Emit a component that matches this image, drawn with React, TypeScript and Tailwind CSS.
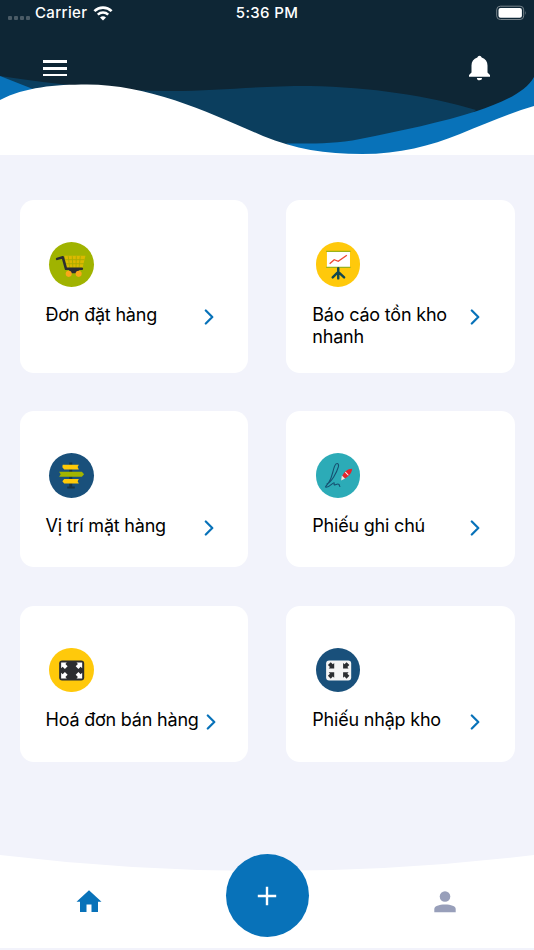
import React from 'react';

type CardItem = {
  title: string;
  color: string;
  height: string;
  chevron: string;
  icon: React.ReactNode;
};

// Four arrows, one in each corner of a rounded plate
const ArrowPlate = ({ plate, arrow, inward }: { plate: string; arrow: string; inward?: boolean }) => {
  const path = inward
    ? 'M6.8 6.8V1.4L5.4 2.6 3.4.6.6 3.4 2.6 5.4 1.4 6.8z'
    : 'M.8.8V6.4L2.3 5 4.5 7.2 7.2 4.5 5 2.3 6.4.8z';
  return (
    <svg viewBox="0 0 44 44" className="h-full w-full">
      <rect x="10" y="12.3" width="24.8" height="19.8" rx="3" fill={plate} />
      <g fill={arrow}>
        <path d={path} transform="translate(11.200 13.500)" />
        <path d={path} transform="translate(33.600 13.500) scale(-1 1)" />
        <path d={path} transform="translate(11.200 30.900) scale(1 -1)" />
        <path d={path} transform="translate(33.600 30.900) scale(-1 -1)" />
      </g>
    </svg>
  );
};

const CartIcon = () => (
  <svg viewBox="0 0 44 44" className="h-full w-full">
    <path d="M15.300 13.700h20.700l-2.800 11.800H17.500z" fill="#dcb900" />
    <path d="M19 14l1.500 11.500M23 14l.6 11.500M27 14l-.3 11.500M31 14l-1.300 11.500M16 17.500h19M16.500 21.500h18" stroke="#a8ac00" strokeWidth=".9" fill="none" />
    <path d="M8 16.700l5.600-1.700L16.800 26.500h15.700" stroke="#2b2d30" strokeWidth="2.500" strokeLinecap="round" strokeLinejoin="round" fill="none" />
    <path d="M19 27h11.500l-2.500 4h-6z" fill="#2b2d30" />
    <circle cx="19.500" cy="31.500" r="3" fill="#fba61a" />
    <circle cx="29.300" cy="31.500" r="3" fill="#fba61a" />
  </svg>
);

const BoardIcon = () => (
  <svg viewBox="0 0 44 44" className="h-full w-full">
    <rect x="10.800" y="9.500" width="22.800" height="15.500" fill="#fff" />
    <path d="M10 9.200h24.200M10 25.100h24.200" stroke="#9bb21a" strokeWidth="1.300" />
    <path d="M13.500 21.500l4.500-4 4 1.600 8.500-6" stroke="#ef4a36" strokeWidth="1.400" fill="none" />
    <path d="M22 26v10M22 29.500l-5.500 5.500M22 29.500l5.800 5.500" stroke="#12474f" strokeWidth="2.400" strokeLinecap="round" />
  </svg>
);

const SignIcon = () => (
  <svg viewBox="0 0 44 44" className="h-full w-full">
    <path d="M20 9.500h3V33h2.500v2.200h-7.500v-2.200h2z" fill="#173549" />
    <path d="M13.500 11.700H29.500l-1.200 2.200 1.200 2.300H15l-1.800-2.200z" fill="#ffca08" />
    <path d="M10 18.500h22.500l2.200 2.500-2.200 2.500H10l1.500-2.500z" fill="#a2b500" />
    <path d="M15 25.700h14.500l-1.200 2.200 1.200 2.300H15l-1.800-2.200z" fill="#ffca08" />
  </svg>
);

const NoteIcon = () => (
  <svg viewBox="0 0 44 44" className="h-full w-full">
    <path d="M11 30.500c4-1.500 9.500-11 11.200-17 .6-3.700-2.200-4.400-3.800-.5-2 5-2.200 10.500-5.400 15.500-1.700 2.800-4 5-3.600 5.200 3.800 1 7.200-4.600 8.400-4.200.8.300-.8 2.400.8 2 1.600-.4 3-1.500 4-.5.7.8.5 1.600 1 2" stroke="#165071" strokeWidth="1.100" fill="none" strokeLinecap="round" />
    <path d="M26 22.500c1.500-3.500 5-7 9.800-7-.2 4.200-3.800 7.800-7.300 9.700z" fill="#e5232b" />
    <path d="M25.500 22.200l3.200 3-3.800 2z" fill="#f7e4dc" />
    <path d="M29 19l3 3" stroke="#fff" strokeWidth="1" />
  </svg>
);

const cards: CardItem[] = [
  { title: 'Đơn đặt hàng', color: 'bg-[#a0b300]', height: 'h-[172.5px]', chevron: 'ml-[158px]', icon: <CartIcon /> },
  { title: 'Báo cáo tồn kho nhanh', color: 'bg-[#ffc90b]', height: 'h-[172.5px]', chevron: 'ml-[158px]', icon: <BoardIcon /> },
  { title: 'Vị trí mặt hàng', color: 'bg-[#19507b]', height: 'h-[156px]', chevron: 'ml-[158px]', icon: <SignIcon /> },
  { title: 'Phiếu ghi chú', color: 'bg-[#2cabb7]', height: 'h-[156px]', chevron: 'ml-[158px]', icon: <NoteIcon /> },
  { title: 'Hoá đơn bán hàng', color: 'bg-[#ffc90b]', height: 'h-[156px]', chevron: 'ml-[160px]', icon: <ArrowPlate plate="#2b2d30" arrow="#fff" /> },
  { title: 'Phiếu nhập kho', color: 'bg-[#19507b]', height: 'h-[156px]', chevron: 'ml-[158px]', icon: <ArrowPlate plate="#f5f5f5" arrow="#2b2d30" inward /> },
];

const StatusBar = () => (
  <div className="relative grid h-[26px] grid-cols-3 items-center text-[15px] tracking-[0.35px] text-white">
    <div className="flex items-center pl-2">
      <div className="mt-[9px] flex gap-[2px]">
        {[0, 1, 2, 3].map((dot) => (
          <span key={dot} className="h-1 w-1 rounded-[1px] bg-[#4a5b66]" />
        ))}
      </div>
      <span className="ml-[5px] font-[450]">Carrier</span>
      <svg viewBox="0 0 20 15" className="ml-[6px] h-[15px] w-5" fill="none" stroke="#fff">
        <path d="M1.4 5.1a12.4 12.4 0 0 1 17.2 0" strokeWidth="2.7" />
        <path d="M4.8 8.7a7.5 7.5 0 0 1 10.4 0" strokeWidth="2.5" />
        <path d="M10 14.5l-3-3a4.5 4.5 0 0 1 6 0z" fill="#fff" stroke="none" />
      </svg>
    </div>
    <span className="text-center font-[450]">5:36 PM</span>
    <svg viewBox="0 0 32 16" className="mr-[7px] h-4 w-8 justify-self-end">
      <rect x="1.7" y="1.2" width="27" height="13.3" rx="3.6" fill="none" stroke="#77848c" />
      <rect x="3.5" y="3" width="23.4" height="9.7" rx="2" fill="#fff" />
      <path d="M30.3 5.700v4.300q1.400-2.100 0-4.300z" fill="#77848c" />
    </svg>
  </div>
);

const Header = () => (
  <header className="relative h-[155px] shrink-0 overflow-hidden bg-[#0e2635]">
    <svg viewBox="0 0 534 155" className="absolute inset-0 h-full w-full">
      <path d="M0 76C60 85 120 91 170 91C220 91 250 86 310 86C370 87 430 96 476 110L420 155H0z" fill="#0b3e5e" />
      <path d="M0 76L38 91L0 105z" fill="#0872b9" />
      <path d="M534 77C525 94 497 104 477 111C443 122 400 131 360 139C335 144 315 143.500 286 143.500L310 155H534z" fill="#0872b9" />
      <path d="M0 100C25 87 55 84.500 87 84.500C150 84.500 210 113 263 136C295 149 325 154 362 154C400 154 430 146 460 134C485 124 510 113 534 106V155H0z" fill="#fff" />
    </svg>
    <StatusBar />
    <div className="relative flex items-start justify-between pr-[43px] pl-[43px]">
      <button aria-label="Menu" className="mt-[34px] flex w-6 flex-col gap-[4px]">
        <span className="h-[2.8px] w-full bg-white" />
        <span className="h-[2.8px] w-full bg-white" />
        <span className="h-[2.8px] w-full bg-white" />
      </button>
      <button aria-label="Notifications" className="mt-[29px] h-[26px] w-[23px]">
        <svg viewBox="0 0 23 26" fill="#fff" className="h-full w-full">
          <path d="M9.300 2.400a2.300 2.300 0 0 1 4.400 0C17.500 3.600 19.500 6.500 19.500 10.500V17.500L22 20V21.800H1V20L3.500 17.500V10.500C3.500 6.500 5.500 3.600 9.300 2.400zM8.900 23h5.200a2.600 2.300 0 0 1-5.200 0z" />
        </svg>
      </button>
    </div>
  </header>
);

const Card = ({ item }: { item: CardItem }) => (
  <button className={`${item.height} flex flex-col rounded-[14px] bg-white pt-[42px] pl-[26px] text-left`}>
    <div className={`${item.color} ml-[3.5px] h-[44.5px] w-[44.5px] rounded-full`}>{item.icon}</div>
    <div className="relative mt-[17px] w-full">
      <span className="block w-[155px] text-[18px] leading-[22px] tracking-[-0.2px] text-black">{item.title}</span>
      <svg viewBox="0 0 10 16" className={`${item.chevron} absolute top-[5px] left-0 h-4 w-[10px]`} fill="none" stroke="#0872b9" strokeWidth="2.2" strokeLinecap="round" strokeLinejoin="round">
        <path d="M1.800 1.500L8.300 8l-6.500 6.500" />
      </svg>
    </div>
  </button>
);

const BottomNav = () => (
  <nav className="relative mt-auto h-[97px] shrink-0">
    <svg viewBox="0 0 534 97" className="absolute inset-0 h-full w-full">
      <path d="M0 2Q267 34 534 2V95H0z" fill="#fff" />
    </svg>
    <div className="relative grid h-full grid-cols-3 justify-items-center">
      <button aria-label="Home" className="mt-[37px] h-[23px] w-[26px]">
        <svg viewBox="0 0 26 23" fill="#0872b9">
          <path d="M13 .3L.5 11.700H4V22h6.500v-7.500h5V22H22V11.700h3.500z" />
        </svg>
      </button>
      <button aria-label="Add" className="mt-[1px] flex h-[83px] w-[83px] items-center justify-center rounded-full bg-[#0872b9]">
        <svg viewBox="0 0 20 20" className="h-5 w-5" stroke="#fff" strokeWidth="2.400">
          <path d="M10 .8v18.400M.8 10h18.400" />
        </svg>
      </button>
      <button aria-label="Profile" className="mt-[38px] h-[22px] w-[22px]">
        <svg viewBox="0 0 22 22" fill="#989fba">
          <circle cx="11" cy="5.500" r="5.300" />
          <path d="M.3 21.300V18C.3 15 5 13.500 11 13.500S21.700 15 21.700 18v3.300z" />
        </svg>
      </button>
    </div>
  </nav>
);

const App: React.FC = () => {
  return (
    <div className="flex h-[950px] w-full flex-col overflow-hidden bg-[#f2f3fb] font-['Inter',sans-serif]">
      <Header />
      <main className="mt-[45px] grid grid-cols-2 gap-x-[38.5px] gap-y-[38.5px] px-[19.5px]">
        {cards.map((item) => (
          <Card key={item.title} item={item} />
        ))}
      </main>
      <BottomNav />
    </div>
  );
};

export default App;
